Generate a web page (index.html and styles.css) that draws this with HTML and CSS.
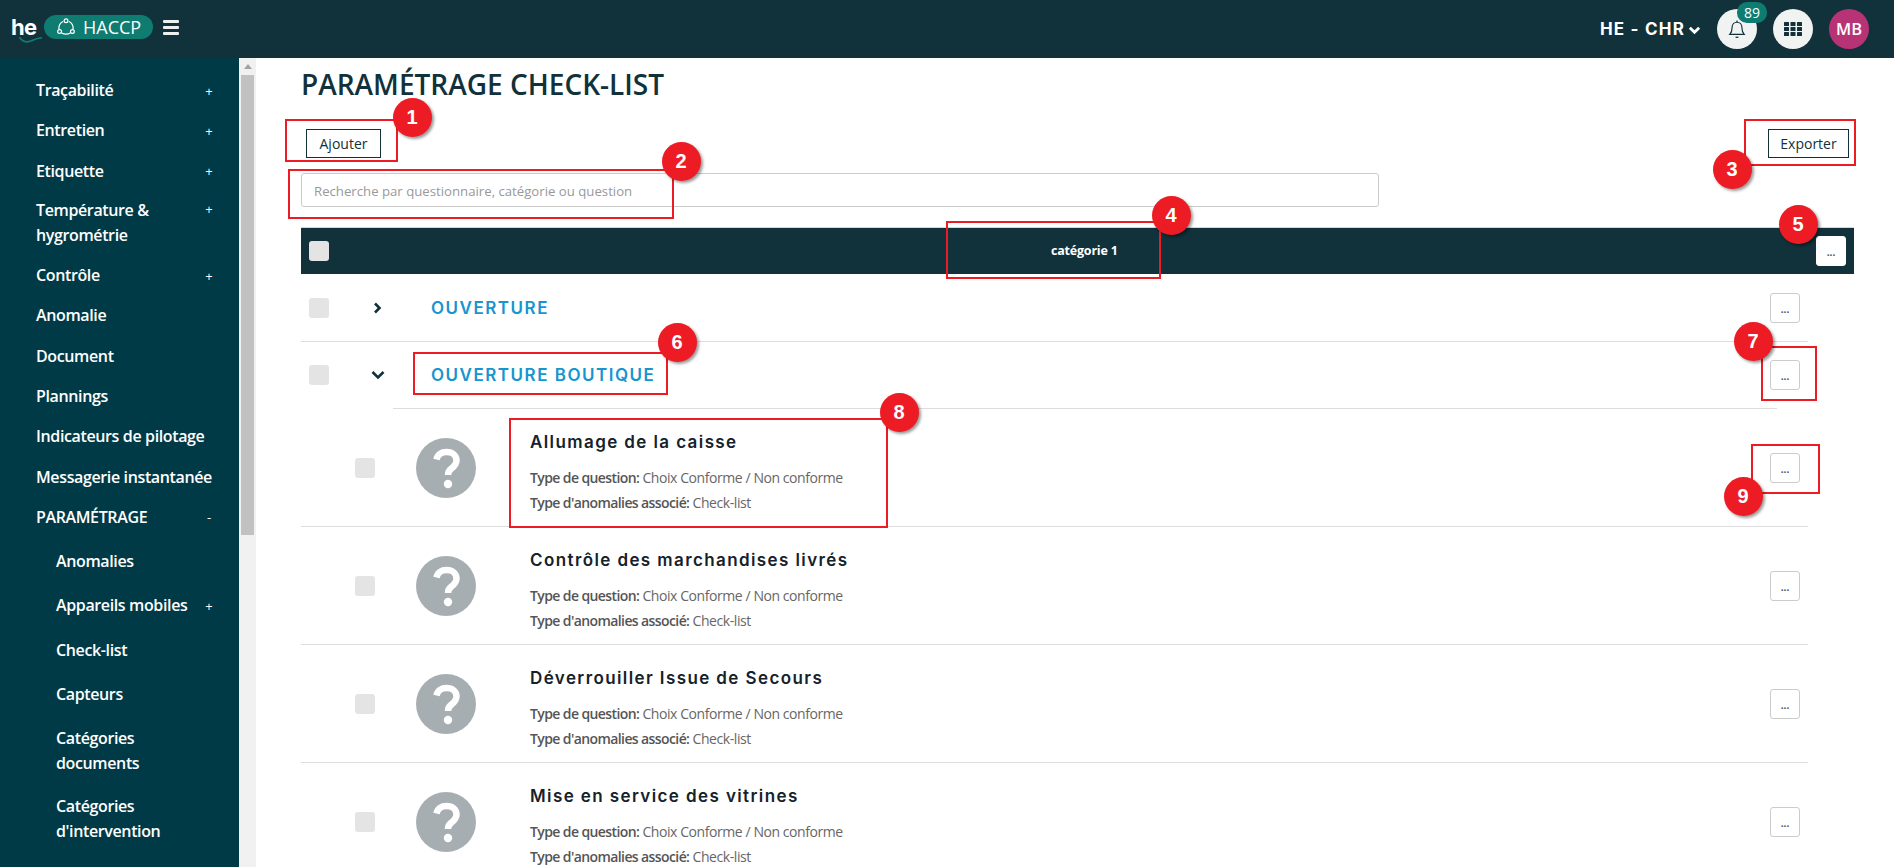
FILE: index.html
```html
<!DOCTYPE html>
<html lang="fr">
<head>
<meta charset="utf-8">
<title>Paramétrage check-list</title>
<link rel="stylesheet" href="styles.css">
</head>
<body>
<div class="app">
  <header class="topbar">
    <div class="brand">
      <span class="he">he<svg class="swoosh" viewBox="0 0 28 10" width="24" height="9"><path d="M1 3c5 7 11 5 15 3s7-3 10-3" fill="none" stroke="#0e7c70" stroke-width="2" stroke-linecap="round"/></svg></span>
      <span class="pill">
        <svg class="pill-icon" viewBox="0 0 18 18" width="18" height="18" fill="none" stroke="#fff" stroke-width="1.2"><path d="M6 3.500C3 5 1.500 8 2 11.500M12 3.500c3 1.500 4.500 4.500 4 8M4.500 15c3 1.500 6 1.500 9 0"/><circle cx="9" cy="2.800" r="1.900"/><circle cx="2.600" cy="13.500" r="1.900"/><circle cx="15.400" cy="13.500" r="1.900"/></svg>
        HACCP
      </span>
      <button class="burger" aria-label="Menu"><span></span><span></span><span></span></button>
    </div>
    <div class="top-right">
      <span class="org">HE - CHR</span>
      <svg class="org-chev" viewBox="0 0 14 10" width="13" height="10"><path d="M2 2.500l5 5 5-5" fill="none" stroke="#fff" stroke-width="3"/></svg>
      <span class="round bell">
        <svg viewBox="0 0 20 22" width="18" height="20" fill="none" stroke="#11313b" stroke-width="1.300"><path d="M2 17c2-2 2.500-4 2.500-7.500C4.500 6 7 3.500 10 3.500s5.500 2.500 5.500 6c0 3.500.5 5.500 2.500 7.500z"/><path d="M10 1.500v2M8.500 19.500c.5 1 2.500 1 3 0" /></svg>
        <span class="count">89</span>
      </span>
      <span class="round apps">
        <svg viewBox="0 0 18 14" width="18" height="14" fill="#11313b"><rect x="0" y="0" width="5" height="4" rx=".5"/><rect x="6.500" y="0" width="5" height="4" rx=".5"/><rect x="13" y="0" width="5" height="4" rx=".5"/><rect x="0" y="5" width="5" height="4" rx=".5"/><rect x="6.500" y="5" width="5" height="4" rx=".5"/><rect x="13" y="5" width="5" height="4" rx=".5"/><rect x="0" y="10" width="5" height="4" rx=".5"/><rect x="6.500" y="10" width="5" height="4" rx=".5"/><rect x="13" y="10" width="5" height="4" rx=".5"/></svg>
      </span>
      <span class="round avatar">MB</span>
    </div>
  </header>

  <div class="body">
    <nav class="sidebar">
      <a class="nav nav-a"><span>Traçabilité</span><i>+</i></a>
      <a class="nav nav-a"><span>Entretien</span><i>+</i></a>
      <a class="nav nav-a"><span>Etiquette</span><i>+</i></a>
      <a class="nav nav-b"><span>Température &amp; hygrométrie</span><i>+</i></a>
      <a class="nav nav-a"><span>Contrôle</span><i>+</i></a>
      <a class="nav nav-a"><span>Anomalie</span></a>
      <a class="nav nav-a"><span>Document</span></a>
      <a class="nav nav-a"><span>Plannings</span></a>
      <a class="nav nav-a"><span>Indicateurs de pilotage</span></a>
      <a class="nav nav-a"><span>Messagerie instantanée</span></a>
      <a class="nav nav-a"><span>PARAMÉTRAGE</span><i>-</i></a>
      <a class="nav sub"><span>Anomalies</span></a>
      <a class="nav sub"><span>Appareils mobiles</span><i>+</i></a>
      <a class="nav sub"><span>Check-list</span></a>
      <a class="nav sub"><span>Capteurs</span></a>
      <a class="nav sub two"><span>Catégories documents</span></a>
      <a class="nav sub two"><span>Catégories d'intervention</span></a>
      <a class="nav sub"><span>Catégories</span></a>
    </nav>
    <div class="scrollbar"><span class="arrow"></span><span class="thumb"></span></div>

    <main class="main">
      <h1 class="title">PARAMÉTRAGE CHECK-LIST</h1>
      <div class="toolbar">
        <button class="outline">Ajouter</button>
        <button class="outline">Exporter</button>
      </div>
      <input class="search" type="text" placeholder="Recherche par questionnaire, catégorie ou question">
      <div class="thead">
        <span class="cb"></span>
        <span class="thead-label">catégorie 1</span>
        <button class="more">...</button>
      </div>

      <div class="list">
        <div class="row row-line">
          <span class="cb"></span>
          <span class="chev-cell"><svg viewBox="0 0 10 12" width="10" height="12"><path d="M2 1.500l4.500 4.500-4.500 4.500" fill="none" stroke="#11313b" stroke-width="2.600"/></svg></span>
          <span class="cat">OUVERTURE</span>
          <button class="more">...</button>
        </div>
        <div class="row row-open">
          <span class="cb"></span>
          <span class="chev-cell open"><svg viewBox="0 0 14 10" width="14" height="10"><path d="M1.500 2l5.500 5.500 5.500-5.500" fill="none" stroke="#11313b" stroke-width="2.600"/></svg></span>
          <span class="cat">OUVERTURE BOUTIQUE</span>
          <button class="more">...</button>
        </div>
        <div class="subline"></div>

        <div class="item">
          <span class="cb"></span>
          <svg class="q" viewBox="0 0 60 60" width="60" height="60"><circle cx="30" cy="30" r="30" fill="#a7aeb1"/><path d="M20.500 21.500c1-5 5-7.500 10-7.500 6 0 10 3.500 10 8.500 0 4-2.500 6-5 8-2.500 1.800-3.500 3.200-3.500 6.500" fill="none" stroke="#fff" stroke-width="6.500"/><circle cx="32" cy="46" r="4.200" fill="#fff"/></svg>
          <div class="info">
            <div class="q-title">Allumage de la caisse</div>
            <div class="meta"><b>Type de question:</b> Choix Conforme / Non conforme</div>
            <div class="meta"><b>Type d'anomalies associé:</b> Check-list</div>
          </div>
          <button class="more">...</button>
        </div>
        <div class="item">
          <span class="cb"></span>
          <svg class="q" viewBox="0 0 60 60" width="60" height="60"><circle cx="30" cy="30" r="30" fill="#a7aeb1"/><path d="M20.500 21.500c1-5 5-7.500 10-7.500 6 0 10 3.500 10 8.500 0 4-2.500 6-5 8-2.500 1.800-3.500 3.200-3.500 6.500" fill="none" stroke="#fff" stroke-width="6.500"/><circle cx="32" cy="46" r="4.200" fill="#fff"/></svg>
          <div class="info">
            <div class="q-title">Contrôle des marchandises livrés</div>
            <div class="meta"><b>Type de question:</b> Choix Conforme / Non conforme</div>
            <div class="meta"><b>Type d'anomalies associé:</b> Check-list</div>
          </div>
          <button class="more">...</button>
        </div>
        <div class="item">
          <span class="cb"></span>
          <svg class="q" viewBox="0 0 60 60" width="60" height="60"><circle cx="30" cy="30" r="30" fill="#a7aeb1"/><path d="M20.500 21.500c1-5 5-7.500 10-7.500 6 0 10 3.500 10 8.500 0 4-2.500 6-5 8-2.500 1.800-3.500 3.200-3.500 6.500" fill="none" stroke="#fff" stroke-width="6.500"/><circle cx="32" cy="46" r="4.200" fill="#fff"/></svg>
          <div class="info">
            <div class="q-title">Déverrouiller Issue de Secours</div>
            <div class="meta"><b>Type de question:</b> Choix Conforme / Non conforme</div>
            <div class="meta"><b>Type d'anomalies associé:</b> Check-list</div>
          </div>
          <button class="more">...</button>
        </div>
        <div class="item">
          <span class="cb"></span>
          <svg class="q" viewBox="0 0 60 60" width="60" height="60"><circle cx="30" cy="30" r="30" fill="#a7aeb1"/><path d="M20.500 21.500c1-5 5-7.500 10-7.500 6 0 10 3.500 10 8.500 0 4-2.500 6-5 8-2.500 1.800-3.500 3.200-3.500 6.500" fill="none" stroke="#fff" stroke-width="6.500"/><circle cx="32" cy="46" r="4.200" fill="#fff"/></svg>
          <div class="info">
            <div class="q-title">Mise en service des vitrines</div>
            <div class="meta"><b>Type de question:</b> Choix Conforme / Non conforme</div>
            <div class="meta"><b>Type d'anomalies associé:</b> Check-list</div>
          </div>
          <button class="more">...</button>
        </div>
      </div>
    </main>
  </div>

  <div class="frame f1"></div>
  <div class="frame f2"></div>
  <div class="frame f3"></div>
  <div class="frame f4"></div>
  <div class="frame f6"></div>
  <div class="frame f7"></div>
  <div class="frame f8"></div>
  <div class="frame f9"></div>
  <span class="pin p1">1</span>
  <span class="pin p2">2</span>
  <span class="pin p3">3</span>
  <span class="pin p4">4</span>
  <span class="pin p5">5</span>
  <span class="pin p6">6</span>
  <span class="pin p7">7</span>
  <span class="pin p8">8</span>
  <span class="pin p9">9</span>
</div>
</body>
</html>
```

FILE: styles.css
```css
* { box-sizing: border-box; }
html, body { margin: 0; height: 100%; overflow: hidden; background: #fff; }
body { font-family: "Open Sans", "Liberation Sans", sans-serif; color: #11313b; }
.app { position: relative; height: 867px; display: flex; flex-direction: column; overflow: hidden; }

/* top bar */
.topbar { flex: 0 0 58px; background: #11313b; display: flex; align-items: center; justify-content: space-between; padding: 0 25px 0 11px; }
.brand { display: flex; align-items: center; height: 100%; padding-bottom: 4px; }
.he { position: relative; width: 33px; font: 700 22px/24px "Inter", sans-serif; letter-spacing: -.8px; color: #fff; }
.swoosh { position: absolute; left: 8px; top: 20px; }
.pill { display: flex; align-items: center; gap: 8px; width: 109px; height: 24px; padding-left: 13px; background: #0e7c70; border-radius: 12px; color: #fff; font: 400 18px/24px "Open Sans", sans-serif; }
.pill-icon { flex: none; }
.burger { display: flex; flex-direction: column; gap: 3px; width: 16px; margin-left: 10px; padding: 0; background: none; border: 0; }
.burger span { display: block; height: 3px; background: #eef0f0; border-radius: 1px; }
.top-right { display: flex; align-items: center; }
.org { font: 700 17px/24px "Inter", sans-serif; letter-spacing: 1.200px; color: #fff; }
.org-chev { margin: 2px 16px 0 3px; }
.round { position: relative; display: flex; align-items: center; justify-content: center; width: 40px; height: 40px; border-radius: 50%; background: #f1f2f2; }
.apps { margin-left: 16px; }
.avatar { margin-left: 16px; background: #b83376; color: #fff; font: 600 16.500px/40px "Open Sans", sans-serif; }
.count { position: absolute; left: 20px; top: -7px; width: 30px; height: 21px; border-radius: 10px; background: #0e7c70; color: #fff; font: 400 14px/21px "Open Sans", sans-serif; text-align: center; }

/* sidebar */
.body { flex: 1; display: flex; min-height: 0; }
.sidebar { flex: 0 0 239px; background: #013a47; padding: 12.500px 23px 0 36px; overflow: hidden; }
.nav { display: flex; justify-content: space-between; align-items: center; color: #fff; font: 600 16px/25px "Open Sans", sans-serif; letter-spacing: -.37px; }
.nav i { flex: none; width: 14px; font: 400 13px/14px "Open Sans", sans-serif; letter-spacing: 0; text-align: center; }
.nav-a { height: 40.300px; }
.nav-b { height: 64px; align-items: flex-start; padding-top: 7px; }
.nav-b i { margin-top: 4px; }
.sub { height: 44.500px; margin-left: 20px; }
.nav-a + .sub { margin-top: 1.500px; }
.two { height: 68px; }
.two span { display: block; width: 140px; }

.scrollbar { position: relative; flex: 0 0 17px; background: #f1f1f1; }
.arrow { position: absolute; left: 5px; top: 6px; border: 4px solid transparent; border-top: 0; border-bottom: 5px solid #a3a3a3; }
.thumb { position: absolute; left: 2px; top: 17px; width: 13px; height: 460px; background: #c1c1c1; }

/* main */
.main { flex: 1; min-width: 0; padding: 8px 40px 0 45px; overflow: hidden; }
.title { margin: 0; height: 36px; font: 600 28px/36px "Open Sans", sans-serif; color: #11313b; white-space: nowrap; }
.toolbar { display: flex; justify-content: space-between; margin-top: 27px; padding: 0 5px; }
.outline { height: 29px; padding: 0; background: #fff; border: 1px solid #11313b; color: #11313b; font: 400 14px/27px "Open Sans", sans-serif; }
.outline:first-child { width: 75px; }
.outline:last-child { width: 81px; }
.search { display: block; width: 1078px; height: 34px; margin-top: 15px; padding: 1px 12px 0; border: 1px solid #ccc; border-radius: 3px; font: 400 13.200px/32px "Open Sans", sans-serif; background: #fff; color: #333; }
.search::placeholder { color: #999; opacity: 1; }

.thead { position: relative; display: flex; align-items: center; justify-content: space-between; height: 47px; margin-top: 20px; padding: 0 8px; background: #11313b; border-top: 1px solid #d3d6d7; }
.thead-label { position: absolute; left: 750px; top: 14px; color: #fff; font: 700 12.500px/18px "Open Sans", sans-serif; letter-spacing: -.2px; }
.cb { flex: none; display: block; width: 20px; height: 20px; border-radius: 3px; background: #e4e4e4; }
.more { flex: none; width: 30px; height: 30px; padding: 0 0 2px; background: #fff; border: 1px solid #ccc; border-radius: 3px; color: #44525a; font: 700 10px/30px "Open Sans", sans-serif; }
.thead .more { border-color: #fff; }

.list { width: 1507px; }
.row { display: flex; align-items: center; padding: 0 8px; }
.row-line { height: 68px; border-bottom: 1px solid #ddd; }
.row-open { height: 66px; }
.chev-cell { flex: none; display: flex; align-items: center; width: 102px; padding-left: 44px; }
.chev-cell.open { padding-left: 42px; }
.cat { flex: 1; font: 600 17px/24px "Inter", sans-serif; letter-spacing: 1.500px; color: #1795cf; }
.subline { height: 1px; margin: 0 31px 0 92px; background: #ddd; }
.item { display: flex; align-items: center; height: 118px; padding: 0 8px 0 54px; border-bottom: 1px solid #ddd; }
.q { flex: none; margin-left: 41px; }
.info { flex: 1; padding: 10px 0 0 54px; }
.q-title { font: 600 17px/24px "Inter", sans-serif; letter-spacing: 1.400px; color: #15222a; margin-bottom: 11px; }
.meta { font: 400 14px/25px "Open Sans", sans-serif; letter-spacing: -.43px; color: #666; }
.meta b { font-weight: 600; color: #555; letter-spacing: -.6px; }

/* annotations laid over the screenshot */
.frame { position: absolute; border: 2px solid #ed1c24; }
.f1 { left: 285px; top: 119px; width: 113px; height: 43px; }
.f2 { left: 288px; top: 169px; width: 386px; height: 50px; }
.f3 { left: 1744px; top: 119px; width: 112px; height: 47px; }
.f4 { left: 946px; top: 221px; width: 215px; height: 58px; }
.f6 { left: 413px; top: 352px; width: 255px; height: 43px; }
.f7 { left: 1761px; top: 346px; width: 56px; height: 55px; }
.f8 { left: 509px; top: 418px; width: 379px; height: 110px; }
.f9 { left: 1751px; top: 444px; width: 69px; height: 50px; }
.pin { position: absolute; width: 39px; height: 39px; margin: -19.500px 0 0 -19.500px; border-radius: 50%; background: #ed1c24; box-shadow: 2px 2px 3px rgba(0, 0, 0, .4); color: #fff; font: 700 20px/39px "Liberation Sans", sans-serif; text-align: center; }
.p1 { left: 412px; top: 117px; }
.p2 { left: 681px; top: 161px; }
.p3 { left: 1732px; top: 169px; }
.p4 { left: 1171px; top: 215px; }
.p5 { left: 1798px; top: 224px; }
.p6 { left: 677px; top: 342px; }
.p7 { left: 1753px; top: 341px; }
.p8 { left: 899px; top: 412px; }
.p9 { left: 1743px; top: 496px; }
```
